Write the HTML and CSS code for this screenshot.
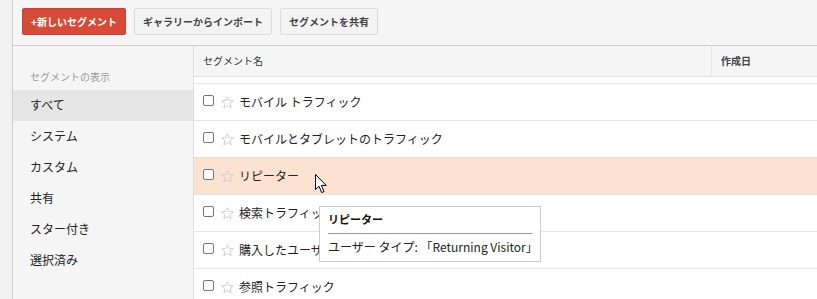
FILE: index.html
```html
<!DOCTYPE html>
<html lang="ja">
<head>
    <meta charset="UTF-8">
    <meta name="viewport" content="width=device-width, initial-scale=1.0">
    <title>セグメント</title>
    <link rel="stylesheet" href="styles.css">
</head>
<body>
    <div class="page">
        <div class="edge"></div>
        <div class="main">
            <div class="toolbar">
                <button class="btn btn-red">+新しいセグメント</button>
                <button class="btn">ギャラリーからインポート</button>
                <button class="btn">セグメントを共有</button>
            </div>
            <div class="content">
                <div class="sidebar">
                    <div class="side-label">セグメントの表示</div>
                    <div class="side-item active">すべて</div>
                    <div class="side-item">システム</div>
                    <div class="side-item">カスタム</div>
                    <div class="side-item">共有</div>
                    <div class="side-item">スター付き</div>
                    <div class="side-item">選択済み</div>
                </div>
                <div class="table">
                    <div class="table-head">
                        <div class="col-name">セグメント名</div>
                        <div class="col-date">作成日</div>
                    </div>
                    <div class="rows" id="rows"></div>
                </div>
            </div>
        </div>
    </div>

    <div class="tooltip">
        <div class="tooltip-title">リピーター</div>
        <div class="tooltip-text">ユーザー タイプ: 「Returning Visitor」</div>
    </div>

    <svg class="cursor" width="13" height="20" viewBox="0 0 13 20">
        <path d="M0.5 0.5 L0.5 15.5 L4 12.2 L6.6 18.6 L9 17.6 L6.4 11.4 L11.2 11.4 Z" fill="#fff" stroke="#000" stroke-width="1" stroke-linejoin="miter"/>
    </svg>

    <script>
        const segments = [
            'モバイル トラフィック',
            'モバイルとタブレットのトラフィック',
            'リピーター',
            '検索トラフィック',
            '購入したユーザー',
            '参照トラフィック'
        ];
        const star = '<svg class="star" width="13" height="13" viewBox="0 0 13 13"><path d="M6.5 0.8 L8.2 4.6 L12.3 4.9 L9.2 7.6 L10.1 11.7 L6.5 9.5 L2.9 11.7 L3.8 7.6 L0.7 4.9 L4.8 4.6 Z" fill="none" stroke="#cfcfcf" stroke-width="1"/></svg>';
        const rows = document.getElementById('rows');
        segments.forEach((name, index) => {
            const hover = index === 2 ? ' hover' : '';
            rows.innerHTML += `
                <div class="row${hover}">
                    <span class="check"></span>
                    ${star}
                    <span class="row-name">${name}</span>
                </div>
            `;
        });
    </script>
</body>
</html>
```

FILE: styles.css
```css
body {
    margin: 0;
    font-family: "Noto Sans CJK JP", "Noto Sans", sans-serif;
    background-color: #f5f5f5;
    color: #222;
    overflow: hidden;
}
.page {
    display: flex;
    height: 299px;
    overflow: hidden;
}
.edge {
    width: 12px;
    background: #f1f1f1;
    border-right: 1px solid #cfcfcf;
}
.main {
    flex: 1;
    display: flex;
    flex-direction: column;
    min-height: 0;
}
.toolbar {
    flex-shrink: 0;
    height: 46px;
    box-sizing: border-box;
    padding: 8px 0 0 9px;
    display: flex;
    align-items: flex-start;
    gap: 8px;
    border-bottom: 1px solid #cfcfcf;
}
.btn {
    height: 27px;
    padding: 0 8px;
    font-family: inherit;
    font-size: 10px;
    font-weight: bold;
    color: #444;
    background: #f3f3f3;
    border: 1px solid #dcdcdc;
    border-radius: 2px;
}
.btn-red {
    color: #fff;
    background: #d84a38;
    border-color: #c9412f;
}
.content {
    flex: 1;
    display: flex;
    min-height: 0;
}
.sidebar {
    width: 180px;
    flex-shrink: 0;
    border-right: 1px solid #dedede;
}
.side-label {
    height: 44px;
    box-sizing: border-box;
    padding: 24px 0 0 17px;
    font-size: 10px;
    line-height: 14px;
    color: #999;
}
.side-item {
    height: 31px;
    line-height: 29px;
    padding-left: 17px;
    font-size: 12px;
    color: #222;
}
.side-item.active {
    background: #e6e6e6;
}
.table {
    flex: 1;
    display: flex;
    flex-direction: column;
}
.table-head {
    flex-shrink: 0;
    display: flex;
    height: 30px;
    border-bottom: 1px solid #e0e0e0;
    font-size: 10px;
    color: #333;
}
.col-name {
    width: 508px;
    padding-left: 9px;
    line-height: 30px;
    border-right: 1px solid #e6e6e6;
}
.col-date {
    padding-left: 9px;
    line-height: 30px;
    font-weight: bold;
    color: #444;
}
.rows {
    flex: 1;
    background: #fff;
    padding-top: 6px;
}
.row {
    display: flex;
    align-items: center;
    height: 36px;
    padding-left: 9px;
    border-top: 1px solid #e5e5e5;
    font-size: 12px;
}
.row.hover {
    background: #fce3d1;
    border-top-color: #f1d9c9;
}
.check {
    width: 9px;
    height: 9px;
    border: 1px solid #777;
    border-radius: 2px;
    background: #fff;
    margin-top: -4px;
}
.star {
    margin: 0 5px 0 7px;
}
.row-name {
    color: #222;
    margin-top: -1px;
}
.tooltip {
    position: absolute;
    left: 319px;
    top: 206px;
    width: 220px;
    background: #fff;
    border: 1px solid #ccc;
    padding: 3px 0 5px;
}
.tooltip-title {
    margin: 0 8px;
    padding-bottom: 5px;
    border-bottom: 1px solid #999;
    font-size: 11px;
    font-weight: bold;
    line-height: 18px;
    color: #111;
}
.tooltip-text {
    margin: 4px 8px 0;
    font-size: 12px;
    line-height: 18px;
    color: #222;
    white-space: nowrap;
}
.cursor {
    position: absolute;
    left: 315px;
    top: 174px;
}
```
